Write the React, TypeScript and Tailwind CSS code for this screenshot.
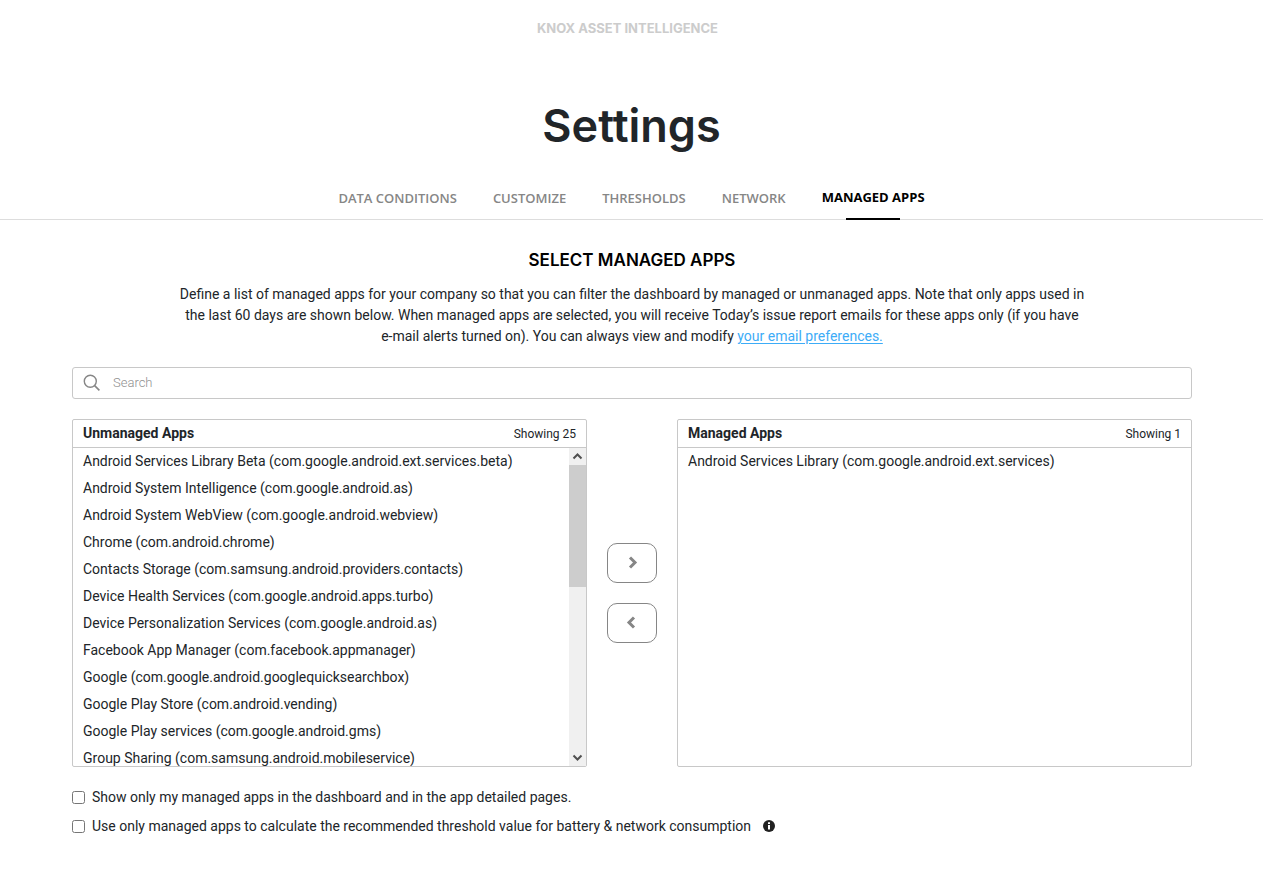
import React from 'react';

const tabs = ['DATA CONDITIONS', 'CUSTOMIZE', 'THRESHOLDS', 'NETWORK', 'MANAGED APPS'];

const unmanagedApps = [
  'Android Services Library Beta (com.google.android.ext.services.beta)',
  'Android System Intelligence (com.google.android.as)',
  'Android System WebView (com.google.android.webview)',
  'Chrome (com.android.chrome)',
  'Contacts Storage (com.samsung.android.providers.contacts)',
  'Device Health Services (com.google.android.apps.turbo)',
  'Device Personalization Services (com.google.android.as)',
  'Facebook App Manager (com.facebook.appmanager)',
  'Google (com.google.android.googlequicksearchbox)',
  'Google Play Store (com.android.vending)',
  'Google Play services (com.google.android.gms)',
  'Group Sharing (com.samsung.android.mobileservice)',
];

const managedApps = ['Android Services Library (com.google.android.ext.services)'];

function ScrollArrow({ down = false }: { down?: boolean }) {
  return (
    <svg viewBox="0 0 17 17" className="h-[17px] w-full shrink-0" aria-hidden="true">
      <path
        d={down ? 'M4.5 6.5 8.5 10.5 12.5 6.5' : 'M4.5 10.5 8.5 6.5 12.5 10.5'}
        fill="none"
        stroke="#505050"
        strokeWidth="2"
      />
    </svg>
  );
}

type AppListProps = { title: string; count: number; apps: string[]; scrollbar?: boolean };

function AppList({ title, count, apps, scrollbar = false }: AppListProps) {
  return (
    <section className="flex h-[348px] min-w-0 flex-1 flex-col overflow-hidden rounded-xs border border-[#c8c8c8]">
      <header className="flex h-7 shrink-0 items-center justify-between border-b border-[#c8c8c8] px-[10px]">
        <h3 className="text-[14px] font-bold">{title}</h3>
        <span className="text-[12px]">Showing {count}</span>
      </header>
      <div className="flex min-h-0 flex-1">
        <ul className="min-w-0 flex-1 overflow-hidden">
          {apps.map((app) => (
            <li key={app} className="truncate px-[10px] text-[14px] leading-[27px]">
              {app}
            </li>
          ))}
        </ul>
        {scrollbar && (
          <div className="flex w-[17px] flex-col bg-[#f0f0f0]" aria-hidden="true">
            <ScrollArrow />
            <div className="h-[122px] bg-[#cdcdcd]" />
            <div className="flex-1" />
            <ScrollArrow down />
          </div>
        )}
      </div>
    </section>
  );
}

function MoveButton({ label, points }: { label: string; points: string }) {
  return (
    <button
      type="button"
      aria-label={label}
      className="flex h-10 w-[50px] items-center justify-center rounded-[10px] border border-[#868686] bg-white"
    >
      <svg viewBox="0 0 14 14" className="size-[14px]" aria-hidden="true">
        <polyline points={points} fill="none" stroke="#868686" strokeWidth="3" />
      </svg>
    </button>
  );
}

export default function App() {
  return (
    <div className="min-h-screen bg-white pb-10 font-[Roboto,sans-serif] text-[#212529]">
      <p className="pt-[18px] pr-2 text-center font-[Inter,sans-serif] text-[13px] leading-5 font-bold text-[#cccccc]">
        KNOX ASSET INTELLIGENCE
      </p>
      <h1 className="mt-[60px] text-center font-[Inter,sans-serif] text-[45px] leading-[56px] font-semibold">
        Settings
      </h1>

      <nav className="mt-[34px] flex justify-center gap-9 border-b border-[#dddddd] font-['Open_Sans',sans-serif]">
        {tabs.map((tab) => {
          const active = tab === 'MANAGED APPS';
          return (
            <a
              key={tab}
              href="#"
              aria-current={active ? 'page' : undefined}
              className={
                active
                  ? '-mb-px flex flex-col items-center justify-between text-[13px] leading-[18px] font-bold text-black'
                  : 'pt-px pb-3 text-[13px] leading-[18px] font-semibold text-[#868686]'
              }
            >
              {tab}
              {active && <span className="h-[2px] w-[54px] bg-black" />}
            </a>
          );
        })}
      </nav>

      <main className="pr-[71px] pl-[72px]">
        <h2 className="mt-7 text-center font-[Inter,sans-serif] text-[17px] leading-6 font-semibold text-black">
          SELECT MANAGED APPS
        </h2>
        <p className="mx-auto mt-3 max-w-[907px] text-center text-[14px] leading-[21px]">
          Define a list of managed apps for your company so that you can filter the dashboard by managed or unmanaged
          apps. Note that only apps used in the last 60 days are shown below. When managed apps are selected, you will
          receive Today’s issue report emails for these apps only (if you have{' '}
          <span className="whitespace-nowrap">e-mail</span> alerts turned on). You can always view and modify{' '}
          <a href="#" className="text-[#3dacf7] underline underline-offset-2">
            your email preferences.
          </a>
        </p>

        <label className="mt-5 flex h-8 items-center rounded-[3px] border border-[#c8c8c8] pl-[10px]">
          <svg viewBox="0 0 18 18" className="size-[18px]" aria-hidden="true">
            <circle cx="7.3" cy="7.3" r="6" fill="none" stroke="#868686" strokeWidth="1.4" />
            <path d="M11.6 11.6 16.4 16.4" stroke="#868686" strokeWidth="1.6" />
          </svg>
          <input
            type="text"
            aria-label="Search"
            placeholder="Search"
            className="ml-3 min-w-0 flex-1 text-[13px] font-light outline-none placeholder:text-[#909090]"
          />
        </label>

        <div className="mt-5 flex items-center gap-5">
          <AppList title="Unmanaged Apps" count={25} apps={unmanagedApps} scrollbar />
          <div className="flex flex-col gap-5">
            <MoveButton label="Add to managed apps" points="5,1.5 10,6.5 5,11.5" />
            <MoveButton label="Remove from managed apps" points="9,1.5 4,6.5 9,11.5" />
          </div>
          <AppList title="Managed Apps" count={1} apps={managedApps} />
        </div>

        <div className="mt-5 flex flex-col gap-[9px] text-[14px] leading-5">
          <label className="flex items-center gap-[7px]">
            <input type="checkbox" className="size-[13px]" />
            Show only my managed apps in the dashboard and in the app detailed pages.
          </label>
          <div className="flex items-center gap-3">
            <label className="flex items-center gap-[7px]">
              <input type="checkbox" className="size-[13px]" />
              Use only managed apps to calculate the recommended threshold value for battery &amp; network consumption
            </label>
            <svg viewBox="0 0 12 12" className="size-3" role="img" aria-label="More information">
              <circle cx="6" cy="6" r="6" fill="#212121" />
              <path d="M5 2.3h2v1.7H5zM5 5h2v4.6H5z" fill="#fff" />
            </svg>
          </div>
        </div>
      </main>
    </div>
  );
}
